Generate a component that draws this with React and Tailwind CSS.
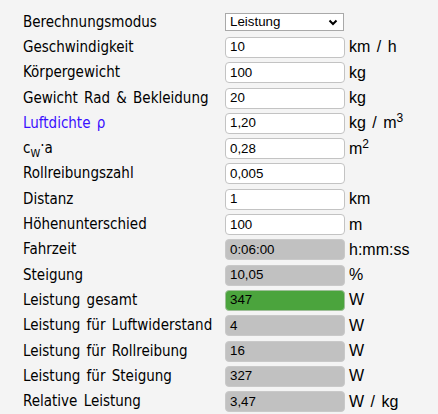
import React from "react";

const Sup = ({ children }) => (
  <span className="inline-block text-[12px] leading-none align-top -translate-y-[3px]">{children}</span>
);

const rows = [
  { label: "Geschwindigkeit", value: "10", unit: <>km <span className="px-[2px]">/</span> h</> },
  { label: "Körpergewicht", value: "100", unit: "kg" },
  { label: "Gewicht Rad & Bekleidung", value: "20", unit: "kg" },
  { label: <span className="text-[#3a10ff]">Luftdichte ρ</span>, value: "1,20", unit: <>kg <span className="px-[2px]">/</span> m<Sup>3</Sup></> },
  {
    label: (
      <>
        c<span className="inline-block text-[11px] leading-none translate-y-[4px]">W</span>
        <span className="inline-block -translate-y-[2px]">·</span>a
      </>
    ),
    value: "0,28",
    unit: <>m<Sup>2</Sup></>,
  },
  { label: "Rollreibungszahl", value: "0,005", unit: "" },
  { label: "Distanz", value: "1", unit: "km" },
  { label: "Höhenunterschied", value: "100", unit: "m" },
  { label: "Fahrzeit", value: "0:06:00", unit: "h:mm:ss", ro: true },
  { label: "Steigung", value: "10,05", unit: "%", ro: true },
  { label: "Leistung gesamt", value: "347", unit: "W", green: true },
  { label: "Leistung für Luftwiderstand", value: "4", unit: "W", ro: true },
  { label: "Leistung für Rollreibung", value: "16", unit: "W", ro: true },
  { label: "Leistung für Steigung", value: "327", unit: "W", ro: true },
  { label: "Relative Leistung", value: "3,47", unit: <>W <span className="px-[2px]">/</span> kg</>, ro: true },
];

function Box({ value, ro, green }) {
  const cls = green
    ? "bg-[#4ba43d] border-[#9fbf99]"
    : ro
    ? "bg-[#c1c1c1] border-[#c9c9c9]"
    : "bg-white border-[#c3c3c3]";
  return (
    <div
      className={`h-[21px] w-[120px] rounded-[4px] border ${cls} px-[4px] flex items-center text-[13.33px] text-black`}
      style={{ fontFamily: '"Liberation Sans", Arial, sans-serif' }}
    >
      {value}
    </div>
  );
}

const labelFont = { fontFamily: '"DejaVu Sans Condensed", "DejaVu Sans", sans-serif' };

export default function App() {
  return (
    <div className="min-h-[414px] w-[438px] bg-[#f4f4f4] pl-[23px] pt-[9.5px]">
      <div className="grid grid-cols-[202px_120px_auto] auto-rows-[25.3px] items-center">
        <div className="text-[15px] text-black leading-none [word-spacing:2px]" style={labelFont}>
          Berechnungsmodus
        </div>
        <div
          className="h-[18px] w-[119px] border border-[#a9a9a9] bg-white flex items-center justify-between pl-[4px] pr-[5px] text-[13.33px] text-black"
          style={{ fontFamily: '"Liberation Sans", Arial, sans-serif' }}
        >
          <span>Leistung</span>
          <svg width="10" height="7" viewBox="0 0 10 7">
            <path d="M1.5 1.5 L5 5 L8.5 1.5" fill="none" stroke="#000" strokeWidth="2" />
          </svg>
        </div>
        <div />
        {rows.map((r, i) => (
          <React.Fragment key={i}>
            <div
              className="text-[15px] text-black leading-none whitespace-nowrap [word-spacing:2px]"
              style={labelFont}
            >
              {r.label}
            </div>
            <Box value={r.value} ro={r.ro} green={r.green} />
            <div
              className="pl-[4px] text-[16px] text-black leading-none whitespace-nowrap"
              style={{ fontFamily: '"Liberation Sans", Arial, sans-serif' }}
            >
              {r.unit}
            </div>
          </React.Fragment>
        ))}
      </div>
    </div>
  );
}
